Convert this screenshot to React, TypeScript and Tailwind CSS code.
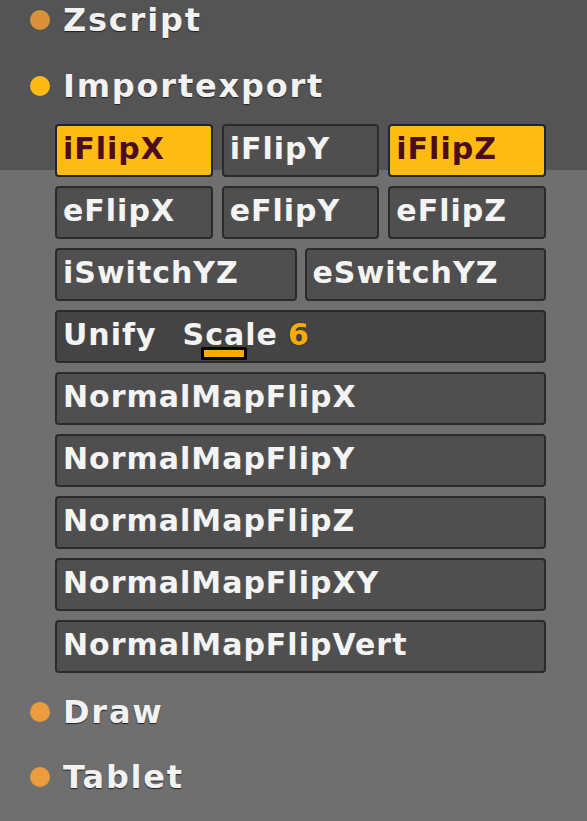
import React from "react";

const font = { fontFamily: '"DejaVu Sans", "Liberation Sans", sans-serif' };

function Header({ label, dot }: { label: string; dot: string }) {
  return (
    <div className="flex h-[40px] items-center">
      <span className={`ml-[30px] size-[20px] rounded-full ${dot}`} />
      <span className="ml-[13px] text-[32px] font-bold leading-none tracking-[1.8px] text-[#f2f2f2] [text-shadow:0_1px_1px_#222]">
        {label}
      </span>
    </div>
  );
}

function Btn({ label, on = false }: { label: string; on?: boolean }) {
  return (
    <div
      className={`flex h-[53px] items-center rounded-[4px] border-2 pl-[6px] pb-[4px] text-[30px] font-bold leading-none tracking-[1px] ${
        on ? "border-[#1e2430] bg-[#ffbb11] text-[#4a0d1c]" : "border-[#2b2b2b] bg-[#4f4f4f] text-[#f4f4f4]"
      }`}
    >
      {label}
    </div>
  );
}

const normals = ["NormalMapFlipX", "NormalMapFlipY", "NormalMapFlipZ", "NormalMapFlipXY", "NormalMapFlipVert"];

export default function App() {
  return (
    <div
      style={font}
      className="min-h-[821px] w-[587px] overflow-hidden bg-[linear-gradient(to_bottom,#545454_170px,#6f6f6f_170px)] select-none"
    >
      <Header label="Zscript" dot="bg-[#d9913a]" />
      <div className="mt-[26px]">
        <Header label="Importexport" dot="bg-[#ffb914]" />
      </div>

      <div className="mt-[18px] ml-[55px] mr-[41px] flex flex-col gap-[9px]">
        <div className="grid grid-cols-3 gap-[9px]">
          <Btn label="iFlipX" on />
          <Btn label="iFlipY" />
          <Btn label="iFlipZ" on />
        </div>
        <div className="grid grid-cols-3 gap-[9px]">
          <Btn label="eFlipX" />
          <Btn label="eFlipY" />
          <Btn label="eFlipZ" />
        </div>
        <div className="grid grid-cols-2 gap-[8px]">
          <Btn label="iSwitchYZ" />
          <Btn label="eSwitchYZ" />
        </div>

        {/* slider */}
        <div className="flex h-[53px] items-center rounded-[4px] border-2 border-[#2b2b2b] bg-[#444444] pl-[6px] pb-[4px] text-[30px] font-bold leading-none tracking-[1px] text-[#f4f4f4]">
          <span>Unify</span>
          <span className="ml-[26px]">
            S
            <span className="relative">
              ca
              <span className="absolute left-[-4px] right-[-2px] top-[30px] h-[13px] rounded-[2px] border-[3px] border-black bg-[#ffaa00]" />
            </span>
            le
          </span>
          <span className="ml-[10px] text-[#ffaa00] [text-shadow:0_0_2px_#1a2a4a]">6</span>
        </div>

        {normals.map((n) => (
          <Btn key={n} label={n} />
        ))}
      </div>

      <div className="mt-[19px]">
        <Header label="Draw" dot="bg-[#eb9c3c]" />
      </div>
      <div className="mt-[25px]">
        <Header label="Tablet" dot="bg-[#eb9c3c]" />
      </div>
    </div>
  );
}
